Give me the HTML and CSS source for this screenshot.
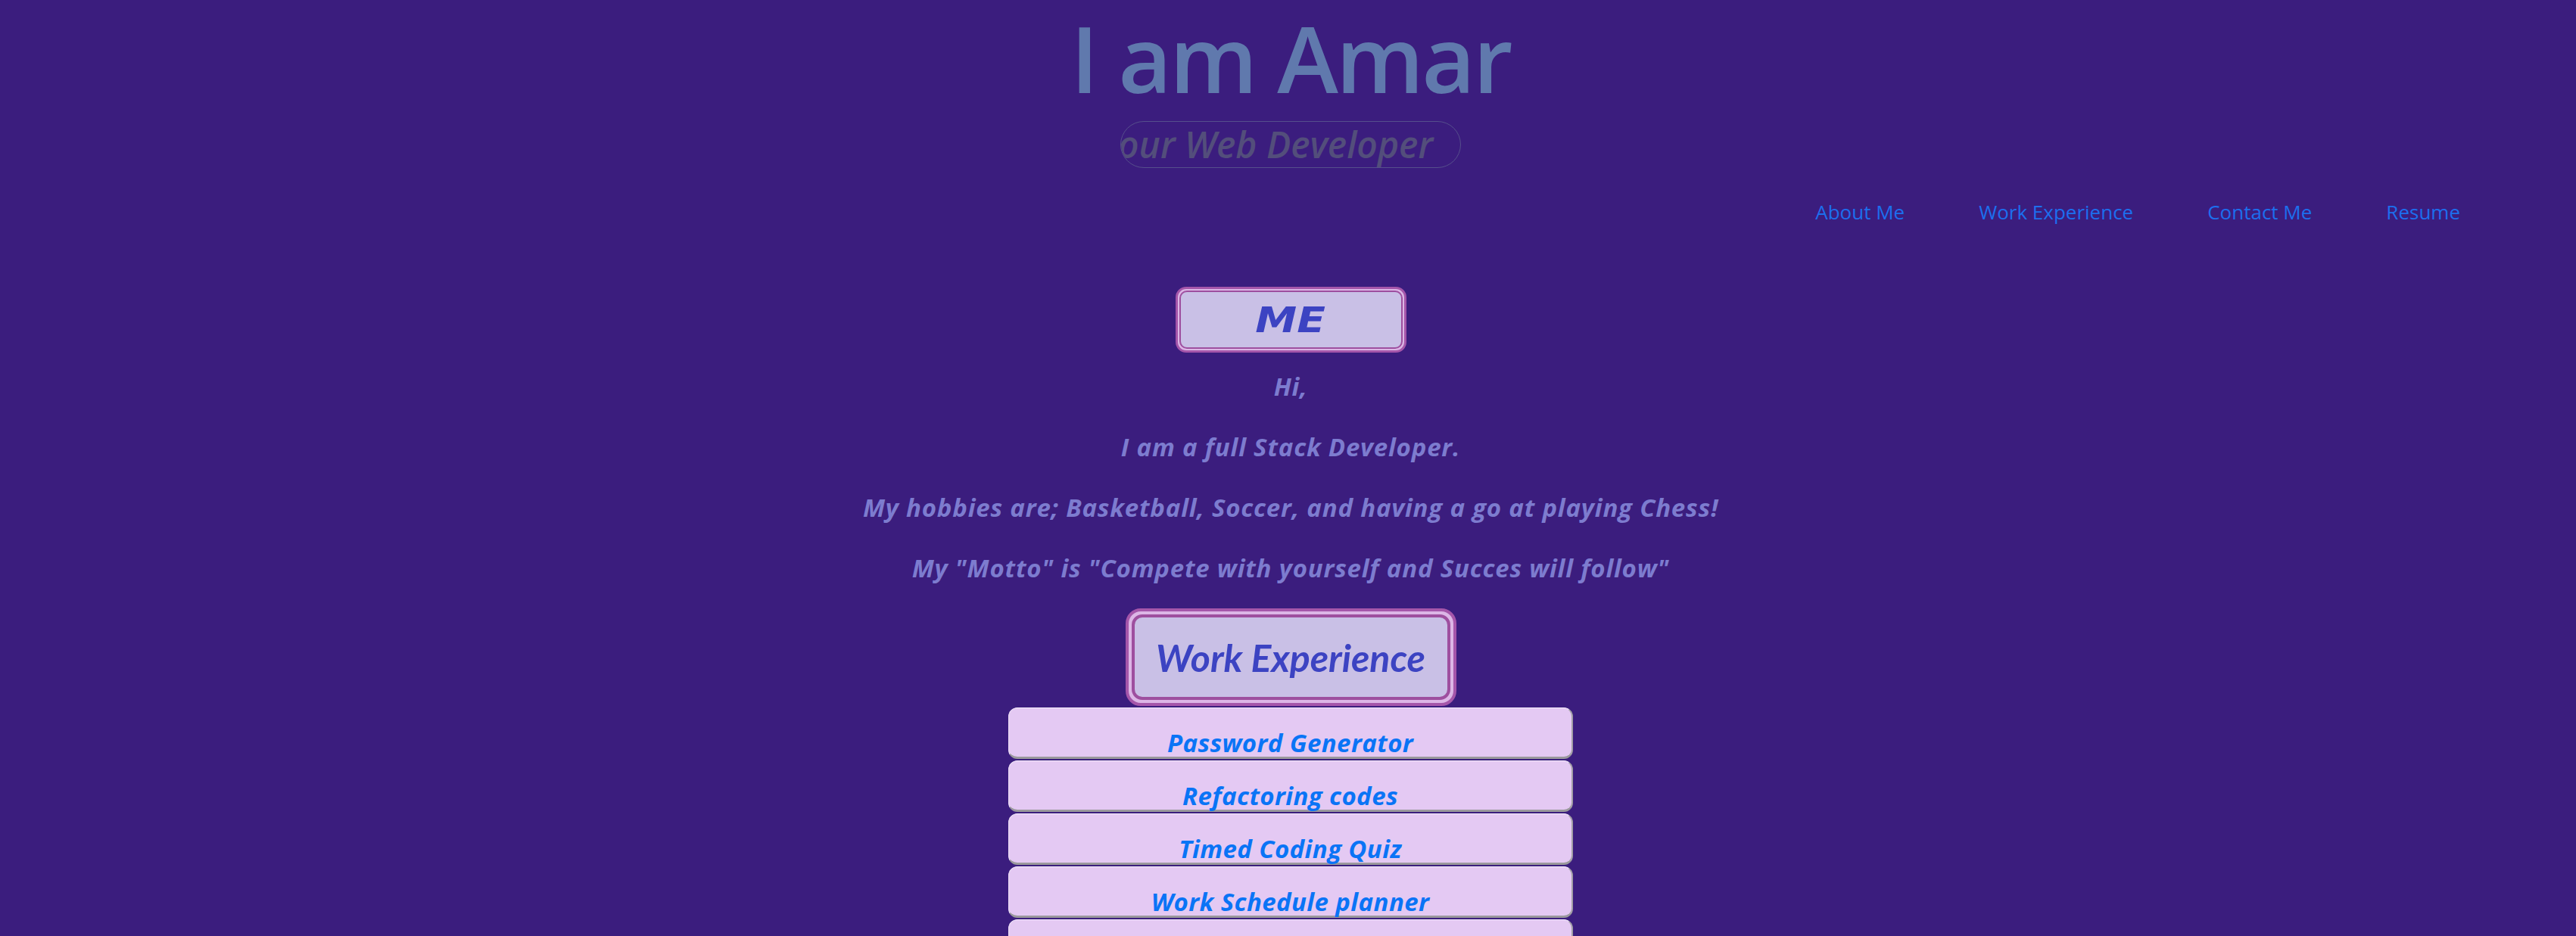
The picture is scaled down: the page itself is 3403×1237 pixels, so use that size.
FILE: index.html
```html
<!DOCTYPE html>
<html lang="en">
<head>
<meta charset="utf-8">
<title>I am Amar</title>
<link rel="stylesheet" href="styles.css">
</head>
<body>
  <header class="hero">
    <h1 class="title">I am Amar</h1>
    <div class="tagline"><span class="tagline-text">Your Web Developer</span></div>
  </header>
  <nav class="nav">
    <a class="nav-link" href="#about">About Me</a>
    <a class="nav-link" href="#work">Work Experience</a>
    <a class="nav-link" href="#contact">Contact Me</a>
    <a class="nav-link" href="#resume">Resume</a>
  </nav>
  <main class="main">
    <section class="about" id="about">
      <h2 class="badge badge-me"><span class="badge-inner"><span class="badge-text me-text">ME</span></span></h2>
      <p class="about-line">Hi,</p>
      <p class="about-line">I am a full Stack Developer.</p>
      <p class="about-line">My hobbies are; Basketball, Soccer, and having a go at playing Chess!</p>
      <p class="about-line">My "Motto" is "Compete with yourself and Succes will follow"</p>
    </section>
    <section class="work" id="work">
      <h2 class="badge badge-work"><span class="badge-inner"><span class="badge-text work-text">Work Experience</span></span></h2>
      <ul class="projects">
        <li class="project"><a class="project-link" href="#">Password Generator</a></li>
        <li class="project"><a class="project-link" href="#">Refactoring codes</a></li>
        <li class="project"><a class="project-link" href="#">Timed Coding Quiz</a></li>
        <li class="project"><a class="project-link" href="#">Work Schedule planner</a></li>
        <li class="project"><a class="project-link" href="#">Weather Dashboard</a></li>
      </ul>
    </section>
  </main>
</body>
</html>
```
FILE: styles.css
```css
html, body {
  margin: 0;
  padding: 0;
  background: #3b1d7e;
}

body {
  font-family: "Open Sans", "Noto Sans", sans-serif;
  padding-left: 7px;
  min-height: 1237px;
}

.hero {
  display: flex;
  flex-direction: column;
  align-items: center;
}

.title {
  margin: 3px 0 0;
  font-size: 122px;
  line-height: 146px;
  font-weight: 600;
  letter-spacing: -3px;
  color: #6079ad;
}

.tagline {
  margin-top: 11px;
  width: 412px;
  height: 60px;
  border: 1px solid #564f8c;
  border-radius: 31px;
  overflow: hidden;
  display: flex;
  justify-content: flex-end;
  padding-right: 36px;
  box-sizing: content-box;
}

.tagline-text {
  white-space: nowrap;
  font-size: 48px;
  line-height: 60px;
  font-style: italic;
  font-weight: 600;
  color: #534e7b;
}

.nav {
  display: flex;
  justify-content: flex-end;
  gap: 98px;
  margin-top: 38px;
  padding-right: 153px;
  height: 40px;
}

.nav-link {
  font-size: 26px;
  line-height: 40px;
  color: #1c6fee;
  text-decoration: none;
}

.main {
  display: flex;
  flex-direction: column;
  align-items: center;
}

.about, .work {
  display: flex;
  flex-direction: column;
  align-items: center;
}

.badge {
  margin: 0;
  display: flex;
  box-sizing: border-box;
  background: #dcb6e6;
}

.badge-inner {
  flex: 1;
  display: flex;
  align-items: center;
  justify-content: center;
  background: #c9c0e6;
}

.badge-text {
  font-style: italic;
  color: #3c43c2;
}

.badge-me {
  margin-top: 79px;
  margin-bottom: 21px;
  width: 305px;
  height: 87px;
  border: 3px solid #a556aa;
  border-radius: 14px;
  padding: 2px;
}

.badge-me .badge-inner {
  border: 2px solid #9e4f9f;
  border-radius: 10px;
}

.me-text {
  font-family: "DejaVu Sans", sans-serif;
  font-weight: 700;
  font-size: 46px;
  line-height: 50px;
  display: inline-block;
  transform: scaleX(1.2);
}

.about-line {
  margin: 0 0 33px;
  font-size: 33px;
  line-height: 47px;
  font-style: italic;
  font-weight: 700;
  letter-spacing: 0.8px;
  color: #7d7ccf;
  text-align: center;
}

.about-line:last-child {
  margin-bottom: 30px;
}

.badge-work {
  width: 437px;
  height: 129px;
  border: 4px solid #a556aa;
  border-radius: 20px;
  padding: 4px;
}

.badge-work .badge-inner {
  border: 4px solid #9e4f9f;
  border-radius: 14px;
}

.work-text {
  font-family: "Lato", sans-serif;
  font-weight: 700;
  font-size: 50px;
  line-height: 60px;
}

.projects {
  list-style: none;
  margin: 2px 0 0;
  padding: 0;
  display: flex;
  flex-direction: column;
  gap: 2px;
}

.project {
  width: 746px;
  box-sizing: border-box;
  height: 68px;
  padding-top: 27px;
  background: #e4c9f3;
  border-top: 1px solid #f6eefb;
  border-left: 1px solid #f0e4f7;
  border-right: 2px solid #a3a0a6;
  border-bottom: 3px solid #9a989c;
  border-radius: 12px;
  text-align: center;
}

.project-link {
  font-size: 33px;
  line-height: 37px;
  font-style: italic;
  font-weight: 700;
  letter-spacing: 0.4px;
  color: #0a74f6;
  text-decoration: none;
}
```
